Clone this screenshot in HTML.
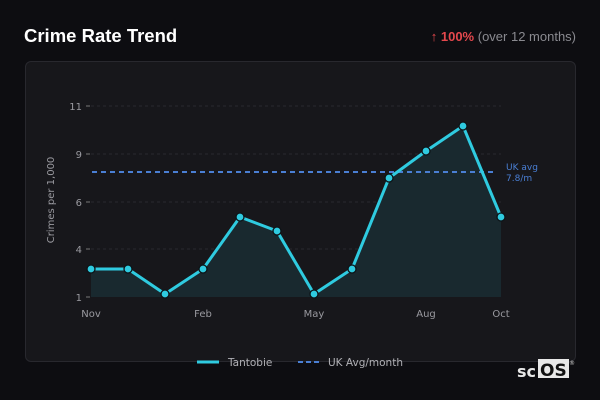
<!DOCTYPE html>
<html><head><meta charset="utf-8"><style>
body{margin:0;width:600px;height:400px;background:#0d0d11;font-family:"Liberation Sans","DejaVu Sans",sans-serif;overflow:hidden;position:relative}
.t{position:absolute;left:24px;top:25px;color:#fff;font-weight:bold;font-size:18.5px;font-family:"Liberation Sans",sans-serif}
.r{position:absolute;right:24px;top:29px;font-size:13px;color:#8a8a90;font-family:"Liberation Sans",sans-serif}
.r b{color:#e5484d}
.card{position:absolute;left:25px;top:61px;width:549px;height:299px;background:#17171b;border:1px solid #28282e;border-radius:6px}
</style></head><body>
<div class="t">Crime Rate Trend</div>
<div class="r"><b>↑ 100%</b> (over 12 months)</div>
<div class="card"></div>
<svg width="600" height="400" style="position:absolute;left:0;top:0" font-family="DejaVu Sans, sans-serif">
<g stroke="#29292f" stroke-dasharray="3,3" stroke-width="1">
<line x1="91" y1="106" x2="501" y2="106"/><line x1="91" y1="154" x2="501" y2="154"/><line x1="91" y1="202" x2="501" y2="202"/><line x1="91" y1="249" x2="501" y2="249"/>
</g>
<g stroke="#777" stroke-width="1"><line x1="86" y1="106" x2="90" y2="106"/><line x1="86" y1="154" x2="90" y2="154"/><line x1="86" y1="202" x2="90" y2="202"/><line x1="86" y1="249" x2="90" y2="249"/><line x1="86" y1="297" x2="90" y2="297"/></g>
<g fill="#9a9aa0" font-size="10" text-anchor="end"><text x="82" y="110">11</text><text x="82" y="158">9</text><text x="82" y="206">6</text><text x="82" y="253">4</text><text x="82" y="301">1</text></g>
<text transform="translate(54,200) rotate(-90)" fill="#9a9aa0" font-size="10" text-anchor="middle">Crimes per 1,000</text>
<g fill="#9a9aa0" font-size="10" text-anchor="middle"><text x="91" y="317">Nov</text><text x="203" y="317">Feb</text><text x="314" y="317">May</text><text x="426" y="317">Aug</text><text x="501" y="317">Oct</text></g>
<polygon fill="#19292f" points="91,297 91,269 128,269 165,294 203,269 240,217 277,231 314,294 352,269 389,178 426,151 463,126 501,217 501,297"/>
<line x1="92" y1="172" x2="497" y2="172" stroke="#4a7fd4" stroke-width="2" stroke-dasharray="5,4"/>
<text x="506" y="170" fill="#4a7fd4" font-size="9">UK avg</text><text x="506" y="181" fill="#4a7fd4" font-size="9">7.8/m</text>
<polyline fill="none" stroke="#2fcbe0" stroke-width="3" stroke-linejoin="round" points="91,269 128,269 165,294 203,269 240,217 277,231 314,294 352,269 389,178 426,151 463,126 501,217"/>
<g fill="#2fcbe0" stroke="#0d1418" stroke-width="1.3">
<circle cx="91" cy="269" r="4"/><circle cx="128" cy="269" r="4"/><circle cx="165" cy="294" r="4"/><circle cx="203" cy="269" r="4"/><circle cx="240" cy="217" r="4"/><circle cx="277" cy="231" r="4"/><circle cx="314" cy="294" r="4"/><circle cx="352" cy="269" r="4"/><circle cx="389" cy="178" r="4"/><circle cx="426" cy="151" r="4"/><circle cx="463" cy="126" r="4"/><circle cx="501" cy="217" r="4"/>
</g>
<line x1="197" y1="362" x2="219" y2="362" stroke="#2fcbe0" stroke-width="3"/>
<text x="228" y="366" fill="#b0b0b5" font-size="10.5">Tantobie</text>
<line x1="298" y1="362" x2="320" y2="362" stroke="#4a7fd4" stroke-width="2" stroke-dasharray="5,3"/>
<text x="328" y="366" fill="#b0b0b5" font-size="10.5">UK Avg/month</text>
<text x="517" y="377" fill="#e8e8e8" font-size="16" font-weight="bold">sc</text>
<rect x="538" y="359" width="31" height="19" fill="#e8e8e8"/>
<text x="540" y="376" fill="#111" font-size="17" font-weight="bold">OS</text>
<text x="569" y="365" fill="#ccc" font-size="6">®</text>
</svg>
</body></html>
